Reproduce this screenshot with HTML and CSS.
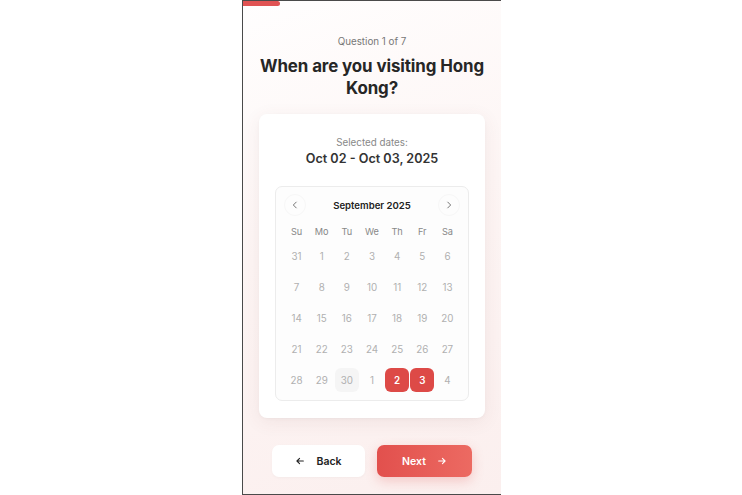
FILE: index.html
```html
<!DOCTYPE html>
<html lang="en">
<head>
<meta charset="utf-8">
<title>When are you visiting Hong Kong?</title>
<link rel="stylesheet" href="styles.css">
</head>
<body>
<div class="stage">
  <div class="frame">
    <div class="progress"><div class="progress-fill" style="width: 14.29%"></div></div>
    <div class="content">
      <p class="step">Question 1 of 7</p>
      <h1 class="title">When are you visiting Hong Kong?</h1>
      <div class="card">
        <p class="sel-label">Selected dates:</p>
        <p class="sel-value">Oct 02 - Oct 03, 2025</p>
        <div class="cal">
          <div class="cal-head">
            <button class="nav" aria-label="Previous month">
              <svg viewBox="0 0 12 12" width="10" height="10"><path d="M7.5 2.5L4 6l3.5 3.5" fill="none" stroke="#777" stroke-width="1.2" stroke-linecap="round" stroke-linejoin="round"/></svg>
            </button>
            <span class="month">September 2025</span>
            <button class="nav" aria-label="Next month">
              <svg viewBox="0 0 12 12" width="10" height="10"><path d="M4.5 2.5L8 6 4.5 9.5" fill="none" stroke="#777" stroke-width="1.2" stroke-linecap="round" stroke-linejoin="round"/></svg>
            </button>
          </div>
          <div class="grid">
            <span class="wd">Su</span><span class="wd">Mo</span><span class="wd">Tu</span><span class="wd">We</span><span class="wd">Th</span><span class="wd">Fr</span><span class="wd">Sa</span>
            <span class="day">31</span><span class="day">1</span><span class="day">2</span><span class="day">3</span><span class="day">4</span><span class="day">5</span><span class="day">6</span>
            <span class="day">7</span><span class="day">8</span><span class="day">9</span><span class="day">10</span><span class="day">11</span><span class="day">12</span><span class="day">13</span>
            <span class="day">14</span><span class="day">15</span><span class="day">16</span><span class="day">17</span><span class="day">18</span><span class="day">19</span><span class="day">20</span>
            <span class="day">21</span><span class="day">22</span><span class="day">23</span><span class="day">24</span><span class="day">25</span><span class="day">26</span><span class="day">27</span>
            <span class="day">28</span><span class="day">29</span><span class="day today">30</span><span class="day">1</span><span class="day selected">2</span><span class="day selected">3</span><span class="day">4</span>
          </div>
        </div>
      </div>
      <div class="actions">
        <button class="btn btn-back">
          <svg viewBox="0 0 12 12" width="10" height="10"><path d="M10 6H2.5M5.5 2.8L2.3 6l3.2 3.2" fill="none" stroke="#222" stroke-width="1.3" stroke-linecap="round" stroke-linejoin="round"/></svg>
          <span>Back</span>
        </button>
        <button class="btn btn-next">
          <span>Next</span>
          <svg viewBox="0 0 12 12" width="10" height="10"><path d="M2 6h7.5M6.5 2.8L9.7 6 6.5 9.2" fill="none" stroke="#fff" stroke-width="1.3" stroke-linecap="round" stroke-linejoin="round"/></svg>
        </button>
      </div>
    </div>
  </div>
</div>
</body>
</html>
```
FILE: styles.css
```css
* { box-sizing: border-box; }
html, body { margin: 0; padding: 0; background: #fff; }
body { font-family: Inter, "Noto Sans", "Liberation Sans", sans-serif; color: #222; }

.stage {
  width: 742px;
  height: 495px;
  display: flex;
  justify-content: center;
  padding-left: 1px;
}

.frame {
  width: 259px;
  height: 495px;
  border-top: 1px solid #4a4a4a;
  border-left: 1px solid #4a4a4a;
  border-bottom: 1px solid #4a4a4a;
  background: linear-gradient(160deg, #fffefe 0%, #fdf5f4 45%, #fbefee 100%);
  display: flex;
  flex-direction: column;
}

.progress { height: 5px; }
.progress-fill {
  height: 5px;
  background: #e05353;
  border-radius: 0 3px 3px 0;
}

.content {
  flex: 1;
  display: flex;
  flex-direction: column;
  align-items: center;
  padding: 29px 12px 0 12px;
}

.step {
  margin: 0;
  font-size: 9.8px;
  line-height: 14px;
  color: #777;
}

.title {
  margin: 6px 0 0;
  font-size: 16.9px;
  line-height: 22px;
  font-weight: 700;
  color: #262626;
  text-align: center;
  letter-spacing: -0.1px;
}

.card {
  margin-top: 15px;
  width: 226px;
  background: #fff;
  border-radius: 8px;
  box-shadow: 0 4px 18px rgba(120, 60, 60, 0.08), 0 1px 3px rgba(0,0,0,0.03);
  padding: 22px 16px 17px;
  display: flex;
  flex-direction: column;
  align-items: center;
}

.sel-label {
  margin: 0;
  font-size: 9.8px;
  line-height: 14px;
  color: #888;
}

.sel-value {
  margin: 1px 0 0;
  font-size: 12.6px;
  line-height: 16px;
  font-weight: 600;
  color: #333;
}

.cal {
  margin-top: 19px;
  width: 194px;
  border: 1px solid #ececec;
  border-radius: 7px;
  padding: 7px 8px 8px;
  background: #fdfdfd;
}

.cal-head {
  display: flex;
  align-items: center;
  justify-content: space-between;
  height: 22px;
}

.nav {
  width: 22px;
  height: 22px;
  border-radius: 50%;
  border: 1px solid #f7f7f7;
  background: transparent;
  padding: 0;
  display: flex;
  align-items: center;
  justify-content: center;
}

.month {
  font-size: 9.6px;
  font-weight: 600;
  color: #222;
}

.grid {
  margin-top: 7px;
  display: grid;
  grid-template-columns: repeat(7, 1fr);
  row-gap: 7px;
}

.wd {
  height: 16px;
  display: flex;
  align-items: center;
  justify-content: center;
  font-size: 9.2px;
  color: #888;
  margin-bottom: -2px;
}

.day {
  height: 24px;
  margin: 0 0.5px;
  display: flex;
  align-items: center;
  justify-content: center;
  font-size: 9.8px;
  color: #b0b0b0;
  border-radius: 6px;
}

.day.today { background: #f5f5f5; }

.day.selected {
  background: #dd4a47;
  color: #fff;
  font-weight: 600;
}

.actions {
  margin-top: 27px;
  display: flex;
  gap: 12px;
}

.btn {
  height: 32px;
  border: none;
  border-radius: 7px;
  display: flex;
  align-items: center;
  justify-content: center;
  gap: 11px;
  font-family: inherit;
  font-size: 10.5px;
  font-weight: 600;
}

.btn-back {
  width: 93px;
  background: #fff;
  color: #222;
  box-shadow: 0 1px 3px rgba(0,0,0,0.03);
}

.btn-next {
  width: 95px;
  background: linear-gradient(90deg, #e2504d, #ec6a62);
  color: #fff;
  box-shadow: 0 4px 12px rgba(224, 80, 77, 0.25);
}
```
